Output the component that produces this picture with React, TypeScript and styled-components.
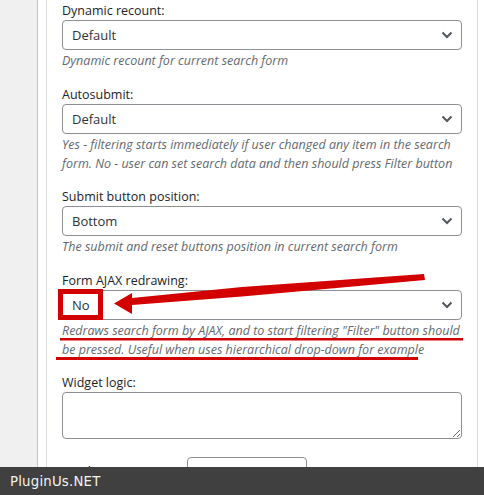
import styled, { createGlobalStyle } from "styled-components";

const GlobalStyle = createGlobalStyle`
  html, body {
    margin: 0;
    padding: 0;
    background: #ffffff;
  }
  body {
    font-family: "Open Sans", "Noto Sans", sans-serif;
    overflow: hidden;
  }
`;

const Page = styled.div`
  display: flex;
  height: 495px;
  overflow: hidden;
`;

const Sidebar = styled.div`
  width: 37px;
  flex-shrink: 0;
  background: #f0f0f1;
  border-right: 1px solid #c3c4c7;
`;

const Panel = styled.div`
  width: 400px;
  flex-shrink: 0;
  margin-left: 8px;
  padding: 2px 15px 0;
  border-left: 1px solid #dcdcde;
  border-right: 1px solid #dcdcde;
`;

const Field = styled.div`
  margin-bottom: 15.5px;
`;

const Label = styled.div`
  font-size: 12.5px;
  line-height: 18px;
  color: #1d2327;
  white-space: nowrap;
`;

const SelectBox = styled.div<{ $width?: number }>`
  box-sizing: border-box;
  height: 30px;
  width: ${(p) => (p.$width ? `${p.$width}px` : "100%")};
  flex-shrink: 0;
  display: flex;
  align-items: center;
  justify-content: space-between;
  padding: 0 8px 0 9px;
  border: 1px solid #8c8f94;
  border-radius: 4px;
  background: #fff;
  font-size: 13px;
  color: #2c3338;
`;

const Description = styled.p`
  margin: 1px 0 0;
  font-size: 12.5px;
  line-height: 19px;
  font-style: italic;
  color: #646970;
`;

const TextArea = styled.textarea`
  display: block;
  box-sizing: border-box;
  width: 100%;
  height: 47px;
  margin: 0;
  border: 1px solid #8c8f94;
  border-radius: 4px;
  font-family: inherit;
`;

const InlineRow = styled.div`
  display: flex;
  align-items: center;
  margin-top: 18px;
`;

const InlineLabel = styled(Label)`
  width: 125px;
  overflow: hidden;
`;

const Footer = styled.div`
  position: fixed;
  left: 0;
  right: 0;
  bottom: 0;
  height: 28px;
  display: flex;
  align-items: center;
  padding-left: 10px;
  background: #404040;
  color: #f2f2f2;
  font-family: "DejaVu Sans", sans-serif;
  font-size: 13.3px;
  letter-spacing: 0.2px;
`;

const Annotation = styled.svg`
  position: absolute;
  top: 0;
  left: 0;
  pointer-events: none;
`;

const Chevron = () => (
  <svg width="12" height="8" viewBox="0 0 12 8">
    <path d="M1.5 1.5 L6 6 L10.5 1.5" fill="none" stroke="#50575e" strokeWidth="2" />
  </svg>
);

type SelectFieldProps = {
  label: string;
  value: string;
  lines: string[];
};

const SelectField = ({ label, value, lines }: SelectFieldProps) => (
  <Field>
    <Label>{label}</Label>
    <SelectBox>
      <span>{value}</span>
      <Chevron />
    </SelectBox>
    <Description>
      {lines.map((line, i) => (
        <span key={i}>
          {line}
          {i < lines.length - 1 && <br />}
        </span>
      ))}
    </Description>
  </Field>
);

const RED = "#d30000";

export default function App() {
  return (
    <>
      <GlobalStyle />
      <Page>
        <Sidebar />
        <Panel>
          <SelectField
            label="Dynamic recount:"
            value="Default"
            lines={["Dynamic recount for current search form"]}
          />
          <SelectField
            label="Autosubmit:"
            value="Default"
            lines={[
              "Yes - filtering starts immediately if user changed any item in the search",
              "form. No - user can set search data and then should press Filter button",
            ]}
          />
          <SelectField
            label="Submit button position:"
            value="Bottom"
            lines={["The submit and reset buttons position in current search form"]}
          />
          <SelectField
            label="Form AJAX redrawing:"
            value="No"
            lines={[
              'Redraws search form by AJAX, and to start filtering "Filter" button should',
              "be pressed. Useful when uses hierarchical drop-down for example",
            ]}
          />
          <Field>
            <Label>Widget logic:</Label>
            <TextArea />
            <InlineRow>
              <InlineLabel>Display on taxonomy:</InlineLabel>
              <SelectBox $width={120}>
                <span>All</span>
                <Chevron />
              </SelectBox>
            </InlineRow>
          </Field>
        </Panel>
      </Page>
      <Annotation width="484" height="495" viewBox="0 0 484 495">
        <rect x="60.5" y="291.5" width="40" height="26" fill="none" stroke={RED} strokeWidth="5" />
        <polygon
          points="424,274 425,280 242,296.5 132,305 132,298 242,287"
          fill={RED}
        />
        <polygon points="114,303.5 132,293 132,314" fill={RED} />
        <rect x="60" y="338" width="403" height="2.5" fill={RED} />
        <rect x="56" y="357" width="362" height="3" fill={RED} />
      </Annotation>
      <Footer>PluginUs.NET</Footer>
    </>
  );
}
